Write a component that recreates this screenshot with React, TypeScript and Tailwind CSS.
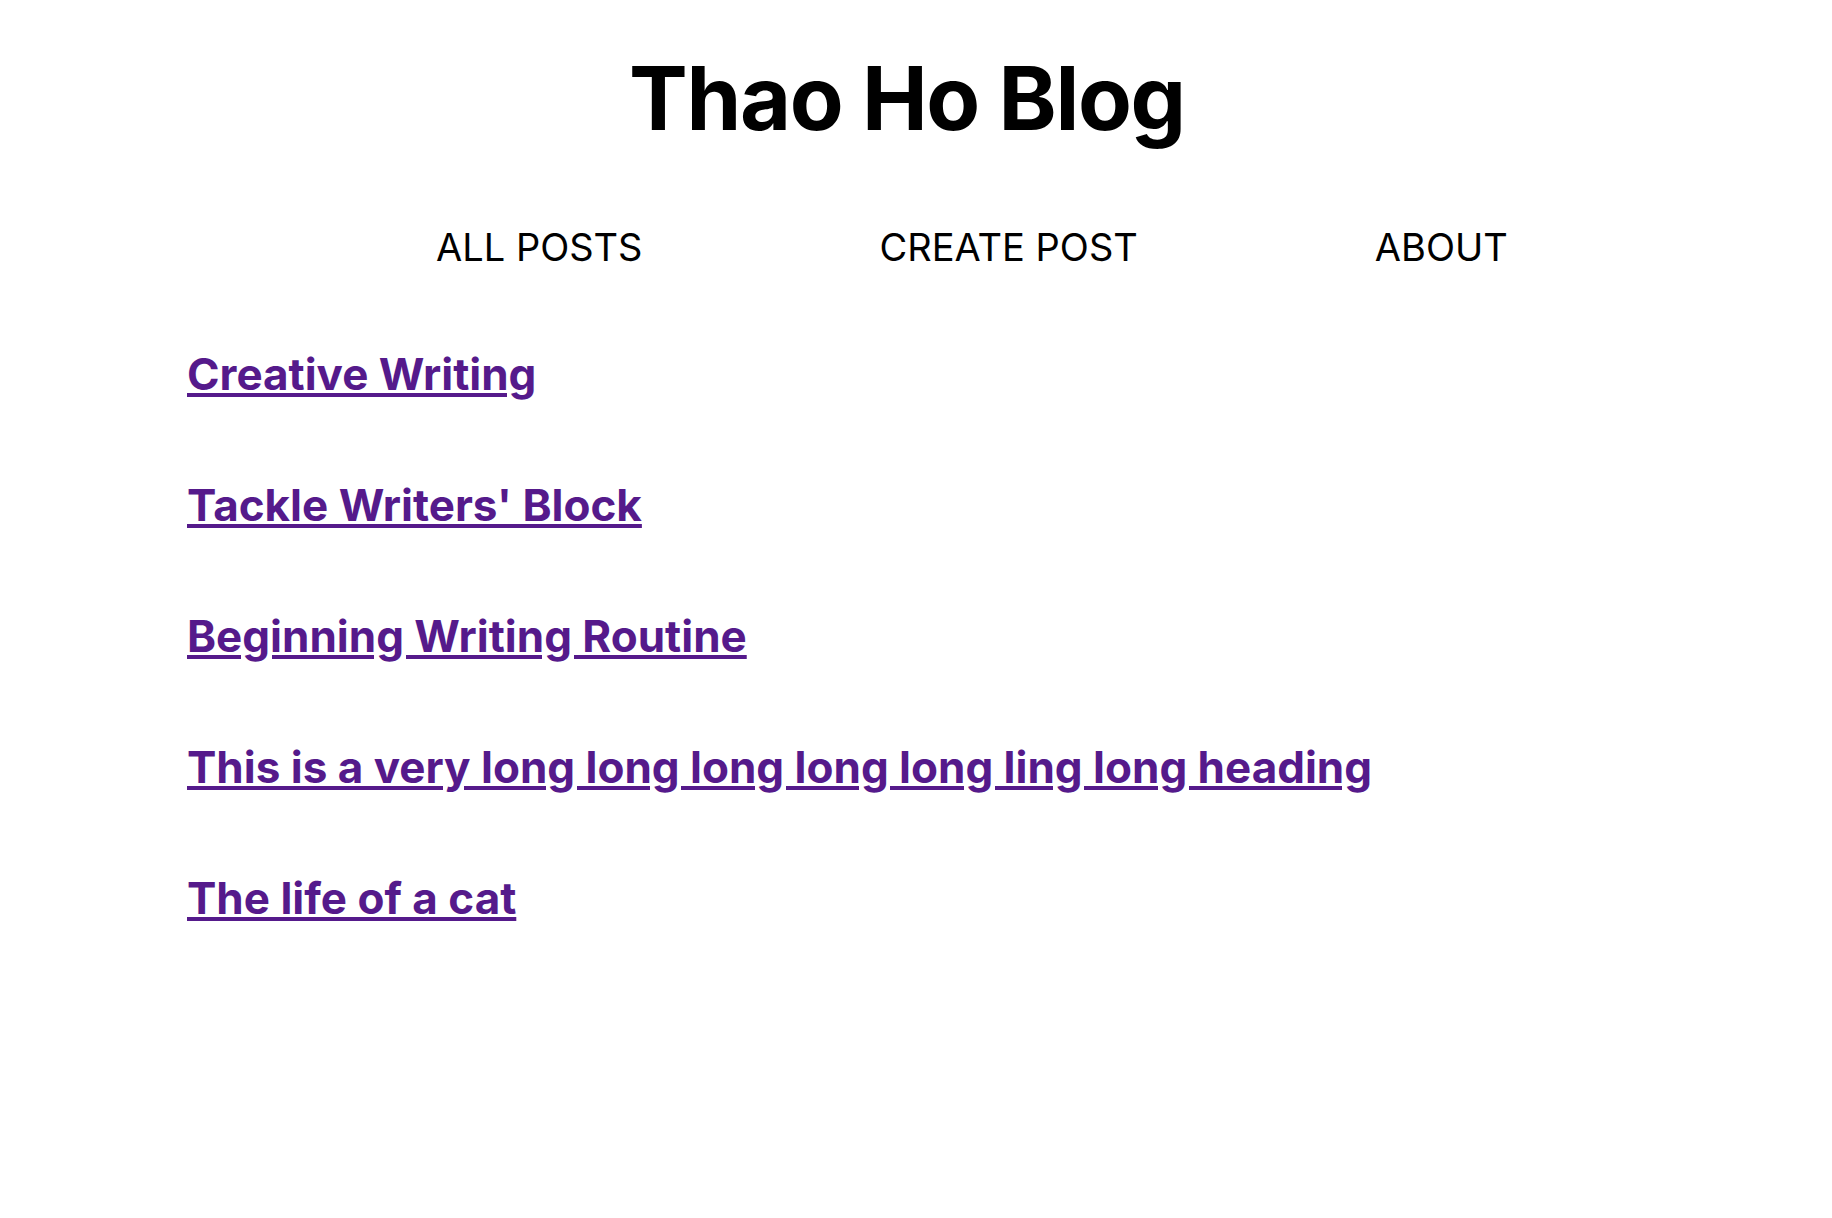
import React from "react";

const posts = [
  "Creative Writing",
  "Tackle Writers' Block",
  "Beginning Writing Routine",
  "This is a very long long long long long ling long heading",
  "The life of a cat",
];

export default function App() {
  return (
    <div className="min-h-[1218px] bg-white font-['Inter','Noto_Sans',sans-serif] text-black">
      <h1 className="pt-[54px] pr-[18px] text-center text-[88px] font-bold leading-none tracking-[-0.015em]">
        Thao Ho Blog
      </h1>
      <nav className="mt-[86px] flex justify-start gap-[237px] pl-[436px] text-[38px] leading-none">
        <a href="#">ALL POSTS</a>
        <a href="#">CREATE POST</a>
        <a href="#">ABOUT</a>
      </nav>
      <ul className="mt-[86px] flex flex-col gap-[87px] pl-[187px]">
        {posts.map((p) => (
          <li key={p}>
            <a href="#" className="text-[44px] font-bold leading-none text-[#551a8b] underline">
              {p}
            </a>
          </li>
        ))}
      </ul>
    </div>
  );
}
